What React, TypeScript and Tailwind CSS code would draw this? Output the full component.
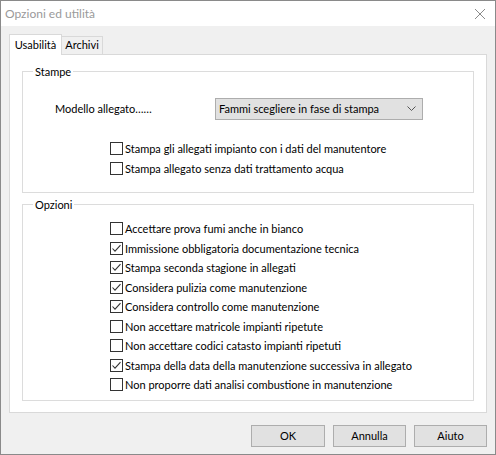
import React from "react";

const font = { fontFamily: 'Lato, "Liberation Sans", Arial, sans-serif' };

function Check({ checked, label, h = "h-[19.5px]" }: { checked?: boolean; label: string; h?: string }) {
  return (
    <div className={`flex items-center gap-[2px] ${h}`}>
      <div className="w-[13px] h-[13px] border border-[#333333] bg-white flex items-center justify-center shrink-0">
        {checked && (
          <svg width="11" height="11" viewBox="0 0 11 11">
            <path d="M1.5 5.5 L4 8.2 L9.5 2.2" fill="none" stroke="#333" strokeWidth="1.1" />
          </svg>
        )}
      </div>
      <span className="text-[11px] leading-none text-black whitespace-nowrap">{label}</span>
    </div>
  );
}

export default function App() {
  return (
    <div
      className="w-[496px] h-[455px] border border-[#8a8a8a] bg-[#f0f0f0] flex flex-col overflow-hidden"
      style={font}
    >
      <div className="h-[25px] bg-white flex items-center justify-between pl-[4px] pr-[9px] shrink-0">
        <span className="text-[12px] text-[#9a9a9a]">Opzioni ed utilità</span>
        <svg width="12" height="12" viewBox="0 0 12 12">
          <path d="M1 1 L11 11 M11 1 L1 11" stroke="#8a8a8a" strokeWidth="1" />
        </svg>
      </div>
      <div className="flex flex-col px-[8px] pt-[7px]">
        <div className="flex items-end h-[21px]">
          <div className="h-[21px] w-[53px] bg-white border border-b-0 border-[#d9d9d9] flex items-center justify-center text-[11px] text-black relative top-[1px]">
            Usabilità
          </div>
          <div className="h-[18px] w-[41px] bg-[#f0f0f0] border border-l-0 border-b-0 border-[#d9d9d9] flex items-center justify-center text-[11px] text-black">
            Archivi
          </div>
        </div>
        <div className="h-[359px] bg-white border border-[#d9d9d9] px-[12px] pt-[11px] flex flex-col">
          <fieldset className="border border-[#dcdcdc] h-[127px] px-[10px]">
            <legend className="text-[11px] px-[2px] ml-[0px] leading-none text-black">Stampe</legend>
            <div className="flex items-center mt-[21px] h-[22px]">
              <span className="text-[11px] text-black w-[182px] pl-[22px]">Modello allegato……</span>
              <div className="w-[208px] h-[22px] border border-[#adadad] bg-[#e1e1e1] flex items-center justify-between pl-[3px] pr-[6px]">
                <span className="text-[11px] text-black whitespace-nowrap">Fammi scegliere in fase di stampa</span>
                <svg width="9" height="6" viewBox="0 0 9 6">
                  <path d="M0.5 0.5 L4.5 4.5 L8.5 0.5" fill="none" stroke="#555" strokeWidth="1" />
                </svg>
              </div>
            </div>
            <div className="flex flex-col mt-[18px] pl-[77px]">
              <Check h="h-[20.5px]" label="Stampa gli allegati impianto con i dati del manutentore" />
              <Check h="h-[20.5px]" label="Stampa allegato senza dati trattamento acqua" />
            </div>
          </fieldset>
          <fieldset className="border border-[#dcdcdc] h-[202px] px-[10px] mt-[6px]">
            <legend className="text-[11px] px-[2px] leading-none text-black">Opzioni</legend>
            <div className="flex flex-col mt-[9px] pl-[77px]">
              <Check label="Accettare prova fumi anche in bianco" />
              <Check checked label="Immissione obbligatoria documentazione tecnica" />
              <Check checked label="Stampa seconda stagione in allegati" />
              <Check checked label="Considera pulizia come manutenzione" />
              <Check checked label="Considera controllo come manutenzione" />
              <Check label="Non accettare matricole impianti ripetute" />
              <Check label="Non accettare codici catasto impianti ripetuti" />
              <Check checked label="Stampa della data della manutenzione successiva in allegato" />
              <Check label="Non proporre dati analisi combustione in manutenzione" />
            </div>
          </fieldset>
        </div>
        <div className="flex justify-end gap-[8px] mt-[12px] pr-[0px]">
          <button className="w-[74px] h-[22px] bg-[#e1e1e1] border border-[#adadad] text-[11px] text-black">OK</button>
          <button className="w-[73px] h-[22px] bg-[#e1e1e1] border border-[#adadad] text-[11px] text-black">Annulla</button>
          <button className="w-[73px] h-[22px] bg-[#e1e1e1] border border-[#adadad] text-[11px] text-black">Aiuto</button>
        </div>
      </div>
    </div>
  );
}
